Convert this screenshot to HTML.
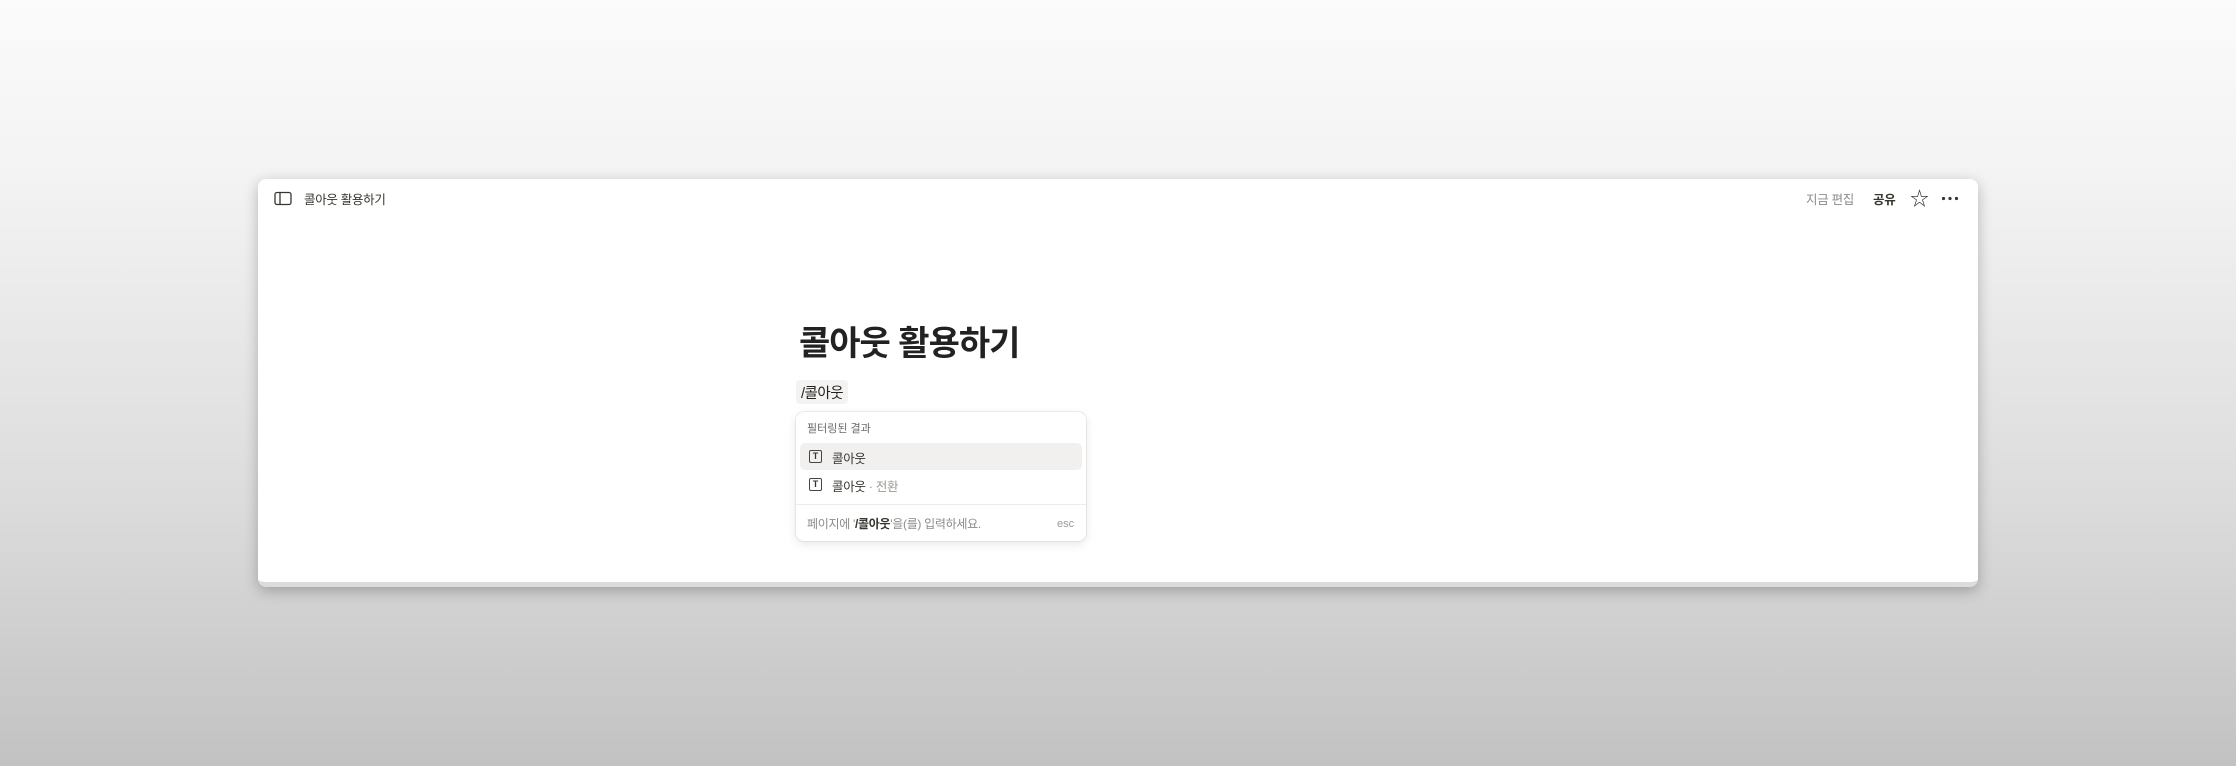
<!DOCTYPE html>
<html><head><meta charset="utf-8"><style>
*{margin:0;padding:0;box-sizing:border-box}
body{width:2236px;height:766px;overflow:hidden;background:linear-gradient(#fbfbfb 0%,#f2f2f2 25%,#dcdcdc 65%,#c2c2c2 100%);font-family:"Liberation Sans","Noto Sans CJK KR",sans-serif;color:#37352f;position:relative}
.win{position:absolute;left:258px;top:179px;width:1720px;height:408px;background:#fff;border-radius:8px;box-shadow:0 4px 14px rgba(0,0,0,.25);border-bottom:5px solid #dcdcdc;overflow:hidden}
.a{position:absolute;white-space:nowrap}
</style></head><body>
<div class="win">
 <svg class="a" style="left:16px;top:12px" width="18" height="15" viewBox="0 0 18 15"><rect x="1" y="1.5" width="16" height="12" rx="2" fill="none" stroke="#37352f" stroke-width="1.3"/><line x1="6" y1="1.5" x2="6" y2="13.5" stroke="#37352f" stroke-width="1.3"/></svg>
 <div class="a" style="left:46px;top:10px;font-size:12.5px;letter-spacing:-0.3px">콜아웃 활용하기</div>
 <div class="a" style="left:1548px;top:10px;font-size:12.5px;color:#8b8a86;letter-spacing:-0.3px">지금 편집</div>
 <div class="a" style="left:1615px;top:10px;font-size:12.5px;font-weight:bold;letter-spacing:-0.3px">공유</div>
 <div class="a" style="left:1652px;top:5px;font-size:19px">☆</div>
 <svg class="a" style="left:1683px;top:17px" width="18" height="5"><circle cx="2.5" cy="2.5" r="1.6" fill="#37352f"/><circle cx="9" cy="2.5" r="1.6" fill="#37352f"/><circle cx="15.5" cy="2.5" r="1.6" fill="#37352f"/></svg>
 <div class="a" style="left:541px;top:137px;font-size:34px;font-weight:bold;color:#222;letter-spacing:-1px">콜아웃 활용하기</div>
 <div class="a" style="left:538px;top:201px;width:52px;height:24px;background:#f4f3f1;border-radius:4px"></div>
 <div class="a" style="left:543px;top:203px;font-size:14.5px;color:#222;letter-spacing:-0.5px">/콜아웃</div>
 <div class="a" style="left:538px;top:233px;width:290px;height:129px;background:#fff;border-radius:8px;box-shadow:0 0 0 1px rgba(0,0,0,.06),0 3px 10px rgba(0,0,0,.1)">
  <div class="a" style="left:11px;top:8px;font-size:11px;color:#6b6a66">필터링된 결과</div>
  <div class="a" style="left:4px;top:31px;width:282px;height:27px;background:#f1f0ee;border-radius:5px"></div>
  <div class="a" style="left:13px;top:38px;width:13px;height:13px;border:1.3px solid #444;border-radius:2px;font-size:9px;text-align:center;line-height:11px;font-weight:bold">T</div>
  <div class="a" style="left:36px;top:36px;font-size:12.5px;letter-spacing:-0.3px">콜아웃</div>
  <div class="a" style="left:13px;top:66px;width:13px;height:13px;border:1.3px solid #444;border-radius:2px;font-size:9px;text-align:center;line-height:11px;font-weight:bold">T</div>
  <div class="a" style="left:36px;top:64px;font-size:12.5px;letter-spacing:-0.3px">콜아웃 <span style="color:#9b9a97">· 전환</span></div>
  <div class="a" style="left:0;top:92px;width:290px;height:1px;background:#ebebea"></div>
  <div class="a" style="left:11px;top:103px;font-size:12px;color:#8b8a86;letter-spacing:-0.3px">페이지에 '<b style="color:#37352f">/콜아웃</b>'을(를) 입력하세요.</div>
  <div class="a" style="left:261px;top:106px;font-size:11px;color:#9b9a97">esc</div>
 </div>
</div>
</body></html>
